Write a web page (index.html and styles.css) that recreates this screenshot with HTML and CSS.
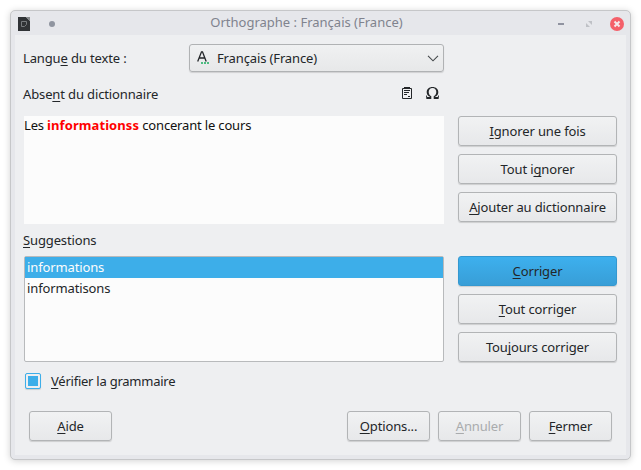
FILE: index.html
```
<!DOCTYPE html>
<html lang="fr">
<head>
<meta charset="utf-8">
<title>Orthographe : Français (France)</title>
<link rel="stylesheet" href="styles.css">
</head>
<body>
<div class="window">
  <header class="titlebar">
    <svg class="app-icon" width="12" height="14" viewBox="0 0 12 14"><path d="M0 0H8L12 4V14H0Z" fill="#303336"/><path d="M8 0H12V4Z" fill="#85898b"/><path d="M3.500 4.500H8.500V7.500L6.500 9.500H3.500Z" fill="none" stroke="#777b7e"/></svg>
    <span class="pin"></span>
    <h1 class="title">Orthographe : Français (France)</h1>
    <div class="controls">
      <svg width="6" height="2" viewBox="0 0 6 2"><path d="M0 0H6V2H0Z" fill="#9093a0"/></svg>
      <svg width="6" height="6" viewBox="0 0 6 6"><path d="M2 0H6V4ZM0 2V6H4Z" fill="#bfc1c6"/></svg>
      <svg width="14" height="14" viewBox="0 0 14 14"><circle cx="7" cy="7" r="7" fill="#f4606a"/><path d="M4.500 4.500L9.500 9.500M9.500 4.500L4.500 9.500" stroke="#f5e9ec" stroke-width="2"/></svg>
    </div>
  </header>
  <main class="content">
    <div class="row language">
      <label>Langu<u>e</u> du texte :</label>
      <div class="combo">
        <svg width="13" height="14" viewBox="0 0 13 14"><path d="M.7 10.500L4.500 .8H5.500L9.200 10.500M2.200 7H7.800" fill="none" stroke="#232629" stroke-width="1.300"/><path d="M4 11H6V13H4ZM7 11H9V13H7ZM10 11H12V13H10Z" fill="#4dbd82"/></svg>
        <span>Français (France)</span>
        <svg class="chevron" width="12" height="7" viewBox="0 0 12 7"><path d="M1 .8L6 5.800L11 .8" fill="none" stroke="#44484b" stroke-width="1.100"/></svg>
      </div>
    </div>
    <div class="row missing">
      <label>Abse<u>n</u>t du dictionnaire</label>
      <div class="tools">
        <svg width="10" height="12" viewBox="0 0 10 12"><path d="M.5 1.500H9.500V11.500H.5Z" fill="none" stroke="#232629"/><path d="M2 0H8V2H2ZM2 3H8V4H2ZM2 5H7V6H2ZM2 7H5V8H2ZM6 9H8V10H6Z" fill="#232629"/></svg>
        <svg width="13" height="12" viewBox="0 0 13 12"><path fill="#232629" fill-rule="evenodd" d="M0 8.500H.8L1.200 10H3.900V9.700C1.800 8.900 .7 7.200 .7 5.200C.7 2.100 3 0 6.500 0S12.300 2.100 12.300 5.200C12.300 7.200 11.200 8.900 9.100 9.700V10H11.800L12.200 8.500H13L12.600 12H7.700V9.200C9.500 8.400 10.300 7 10.300 5.100C10.300 2.500 9 .9 6.500 .9S2.700 2.500 2.700 5.100C2.700 7 3.500 8.400 5.300 9.200V12H.4Z"/></svg>
      </div>
    </div>
    <div class="block">
      <div class="sentence">Les <b>informationss</b> concerant le cours</div>
      <div class="actions">
        <button><span><u>I</u>gnorer une fois</span></button>
        <button><span>Tout i<u>g</u>norer</span></button>
        <button><span><u>A</u>jouter au dictionnaire</span></button>
      </div>
    </div>
    <div class="row suggest"><label><u>S</u>uggestions</label></div>
    <div class="block">
      <ul class="list">
        <li class="selected">informations</li>
        <li>informatisons</li>
      </ul>
      <div class="actions">
        <button class="primary"><span><u>C</u>orriger</span></button>
        <button><span><u>T</u>out corriger</span></button>
        <button><span>Tou<u>j</u>ours corriger</span></button>
      </div>
    </div>
    <div class="row grammar">
      <span class="check"></span>
      <label><u>V</u>érifier la grammaire</label>
    </div>
    <footer class="footer">
      <button class="help"><span><u>A</u>ide</span></button>
      <button><span><u>O</u>ptions...</span></button>
      <button disabled><span><u>A</u>nnuler</span></button>
      <button><span><u>F</u>ermer</span></button>
    </footer>
  </main>
</div>
</body>
</html>
```
FILE: styles.css
```
* { box-sizing: border-box; }
body {
  margin: 0;
  padding: 10px;
  height: 470px;
  overflow: hidden;
  background: #fff;
  color: #232629;
  font: 13px/18px "Noto Sans", sans-serif;
  letter-spacing: -.13px;
}
.window {
  width: 621px;
  height: 450px;
  padding: 0 4px 4px;
  border: 1px solid #c6c7c9;
  border-radius: 5px;
  background: #e6e7eb;
  box-shadow: 0 1px 7px rgba(0, 0, 0, .18);
}
.titlebar {
  display: grid;
  grid-template-columns: 12px 25px 1fr auto;
  align-items: center;
  height: 24px;
  padding: 0 2px 0 3px;
}
.app-icon { margin-top: 2px; }
.pin {
  width: 6px;
  height: 6px;
  margin: 2px 0 0 19px;
  border-radius: 50%;
  background: #9095a0;
}
.title {
  margin: -2px 0 0;
  text-align: center;
  font-size: 13px;
  font-weight: 400;
  letter-spacing: 0;
  color: #80838e;
}
.controls { display: flex; align-items: center; margin-top: 2px; }
.controls svg:nth-child(2) { margin: 0 18px 0 22px; }
.content {
  height: 420px;
  padding: 9px;
  background: #eeeff1;
}
.row { display: flex; align-items: center; margin-left: -1px; }
.language { height: 28px; }
.language label { width: 166px; }
.combo {
  display: flex;
  align-items: center;
  width: 255px;
  height: 28px;
  padding: 0 4px 0 7px;
  border: 1px solid #b0b2b4;
  border-radius: 3px;
  background: linear-gradient(#f0f1f2, #e7e8e9);
  box-shadow: 0 1px 1px rgba(0, 0, 0, .13);
}
.combo span { margin-left: 7px; }
.chevron { margin-left: auto; }
.missing { height: 44px; width: 421px; }
.tools { display: flex; align-items: center; gap: 14px; margin: 0 5px 2px auto; }
.block { display: flex; gap: 14px; }
.sentence {
  width: 420px;
  height: 108px;
  background: #fcfcfc;
  color: #111;
  letter-spacing: -.17px;
}
.sentence b { color: #f00; letter-spacing: .08px; }
.actions { display: flex; flex-direction: column; gap: 8px; width: 159px; }
button {
  height: 30px;
  padding: 0;
  border: 1px solid #b2b4b6;
  border-radius: 3px;
  background: linear-gradient(#f1f2f3, #e7e8ea);
  box-shadow: 0 1px 1px rgba(0, 0, 0, .14);
  color: inherit;
  font: inherit;
  letter-spacing: inherit;
}
.primary {
  border-color: #3498d0;
  background: linear-gradient(#3db0ee, #389ed7);
}
button:disabled { color: #a9abad; }
u { text-decoration: underline 1px; text-underline-offset: 2px; text-decoration-skip-ink: none; }
.suggest { height: 32px; }
.list {
  width: 420px;
  height: 106px;
  margin: 0;
  padding: 0;
  border: 1px solid #b8babc;
  border-radius: 2px;
  background: #fcfcfc;
  list-style: none;
}
.list li { height: 21px; padding-left: 2px; line-height: 21px; }
.list .selected { background: #3daee9; color: #fcfcfc; }
.grammar { height: 38px; margin-left: 1px; gap: 10px; letter-spacing: -.24px; }
.check {
  width: 16px;
  height: 16px;
  padding: 2px;
  border: 1px solid #3daee9;
  border-radius: 2px;
  background: #3daee9 content-box;
  box-shadow: 0 1px 1px rgba(0, 0, 0, .14);
}
.footer { display: flex; gap: 8px; margin: 11px 5px 0; }
.footer button { width: 83px; }
.help { margin-right: auto; }
```
